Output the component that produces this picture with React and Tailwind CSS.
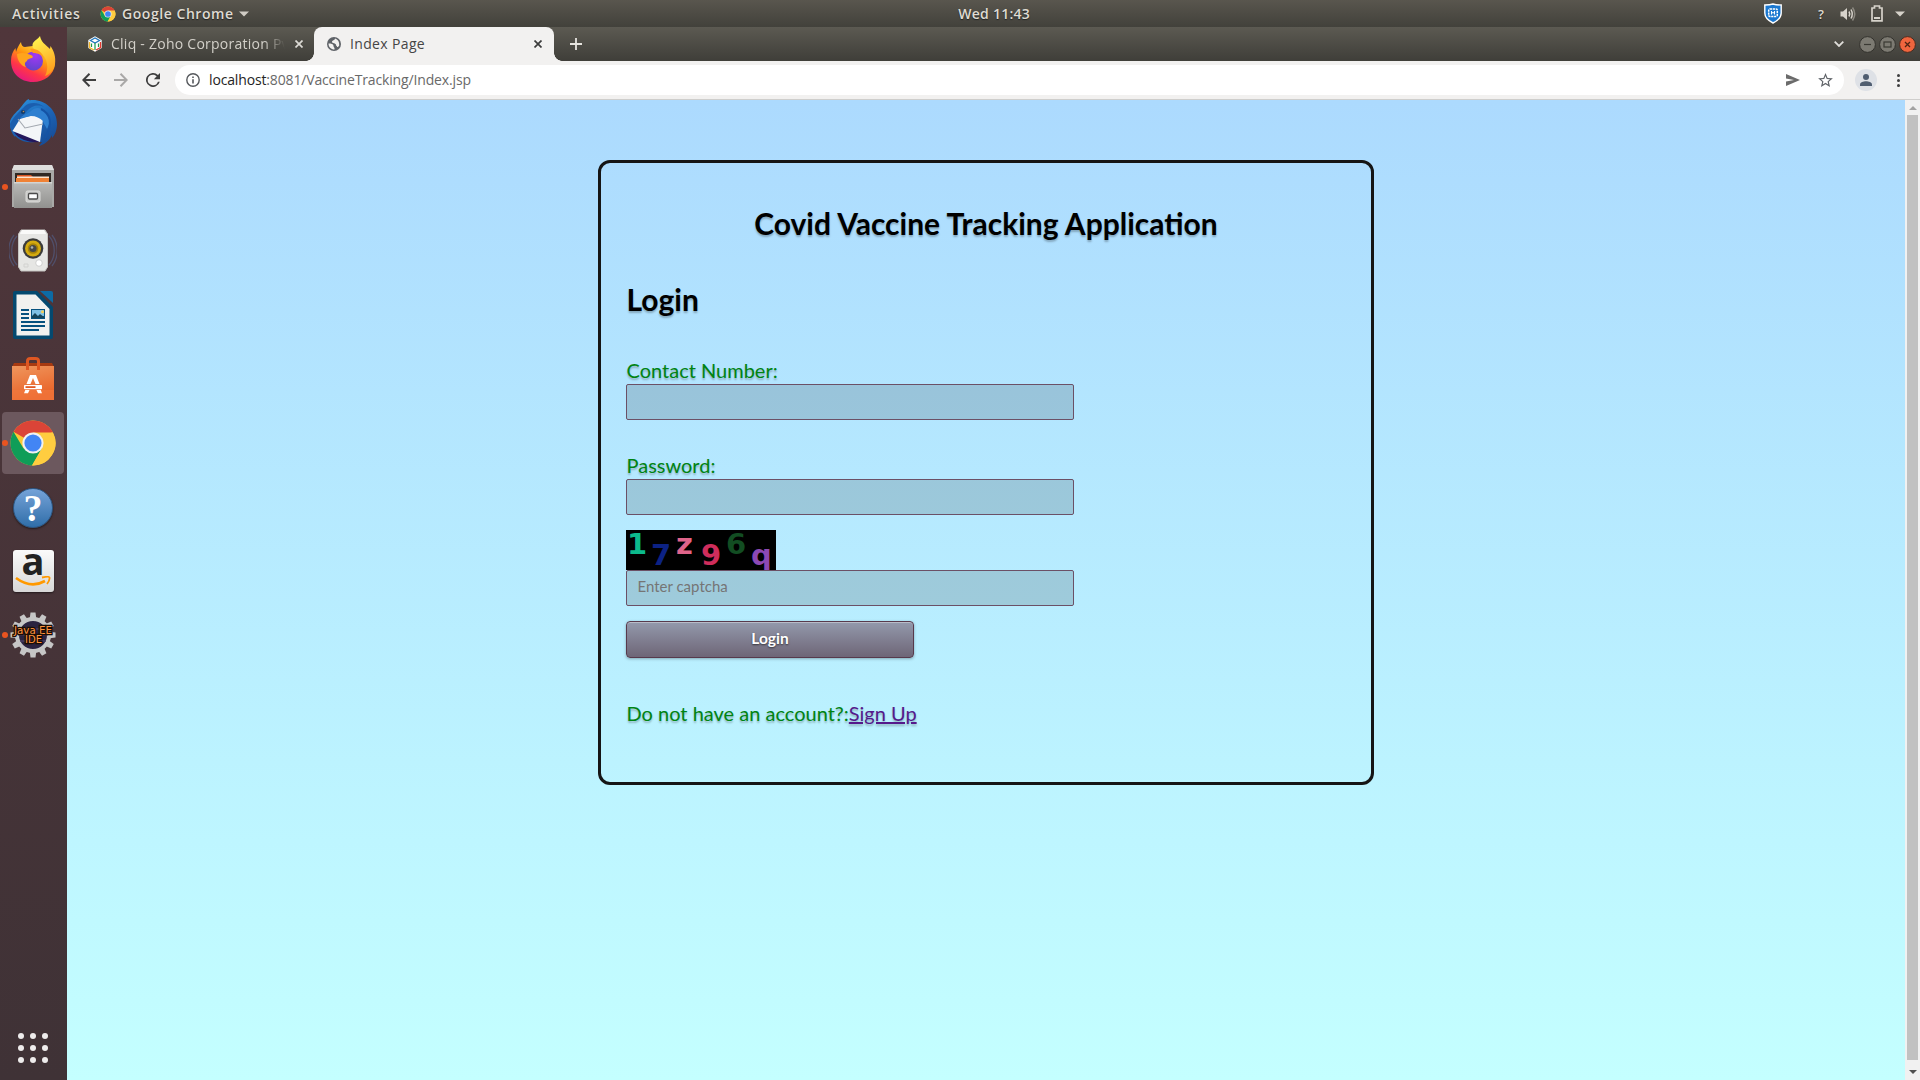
import React from "react";

function ChromeLogo({ className }) {
  return (
    <svg viewBox="0 0 48 48" className={className}>
      <circle cx="24" cy="24" r="22.5" fill="#fcc934" />
      <path d="M24 24 L4.5 12.75 A22.5 22.5 0 0 1 43.5 12.75 Z" fill="#db4437" />
      <path d="M24 24 L43.5 12.75 L24 13.5 Z M24 13.5 H43.8 L42 10.5 H24 Z" fill="#db4437" />
      <path d="M4.5 12.75 L14.5 29.5 L24 24 L32.8 29.5 L23 46.5 A22.5 22.5 0 0 1 4.5 12.75 Z" fill="#0f9d58" />
      <path d="M24 13.5 H43.9 A22.5 22.5 0 0 1 23 46.5 L33 29.3 Z" fill="#ffcd40" />
      <circle cx="24" cy="24" r="10.6" fill="#f1f1f1" />
      <circle cx="24" cy="24" r="8.6" fill="#4285f4" />
    </svg>
  );
}

function Firefox() {
  return (
    <svg viewBox="0 0 48 48" className="size-12">
      <defs>
        <linearGradient id="ff1" x1="0.8" y1="0.05" x2="0.25" y2="1">
          <stop offset="0" stopColor="#fff44f" />
          <stop offset="0.4" stopColor="#ff980e" />
          <stop offset="0.7" stopColor="#ff3647" />
          <stop offset="1" stopColor="#e31587" />
        </linearGradient>
        <radialGradient id="ff2" cx="0.6" cy="0.2" r="0.9">
          <stop offset="0" stopColor="#a238f5" />
          <stop offset="1" stopColor="#5b45c9" />
        </radialGradient>
        <linearGradient id="ff3" x1="0.3" y1="0" x2="0.6" y2="1">
          <stop offset="0" stopColor="#fff44f" />
          <stop offset="1" stopColor="#ff9a1c" />
        </linearGradient>
      </defs>
      <path d="M12 7 C12 10 14 12 16 12 C18 12 21 11 24 11 L38 14 C44 18 46.500 24 46 29 C45 40 35 47 24 47 C11 47 2 38 2 26 C2 20 4 16 6.500 13 L7 17 C8 13 10 10 12 7 Z" fill="url(#ff1)" />
      <path d="M31 1 C32 7 36 9 41 14 L41.500 11 C45 16 47 22 46 29 C45 35 41 39 36 41 C40 34 39 22 31 18 C26 16 22 12 24 8 C26 5 29 4 31 1 Z" fill="url(#ff3)" />
      <circle cx="24.500" cy="26" r="9.500" fill="url(#ff2)" />
      <path d="M8 19 C13 17 17 18 22 20 C24 21 24.500 22 23 23 C20 24 18 24 18 26 C16 27 15 29 17 32 C12 31 8 25 8 19 Z" fill="#ffa41c" />
      <path d="M21 14 C27 13 34 17 35 24 C33 20 29 18 24 18 Z" fill="#ff9a1c" />
    </svg>
  );
}

function Thunderbird() {
  return (
    <svg viewBox="0 0 48 48" className="size-12">
      <defs>
        <linearGradient id="tb" x1="0.2" y1="0" x2="0.8" y2="1">
          <stop offset="0" stopColor="#2a8fdc" />
          <stop offset="0.5" stopColor="#1c63b5" />
          <stop offset="1" stopColor="#164a94" />
        </linearGradient>
      </defs>
      <path d="M1 22 C4 15 9 12 12 8 C15 4 17 1 20 0 C20 1 20 1.500 22 1 C35 0 48 10 48 25 C48 31 46 36 43 39 L43 36 C41 41 35 46 30 47 L33 43 L26 43 C14 45 3 38 1 27 Z" fill="url(#tb)" />
      <path d="M1 25 C5 17 11 12 16 7 C20 3 30 3 35 8 C29 5 22 7 18 12 L8 24 L6 38 C3 35 1 30 1 25 Z" fill="#1b5eae" />
      <path d="M5 33 C9 40 20 44 31 43 L20 37 Z" fill="#24175c" />
      <path d="M11 20 L31 14 L34 20 L31 43 L3.500 32 Z" fill="#f3f5f8" />
      <path d="M9 20 L16 29 L34 25" fill="none" stroke="#a2a7af" strokeWidth="1.100" />
      <path d="M11 19 C15 15 19 15 22 12 C25 9 29 8 32 10 C40 14 43 22 38 30 C36 26 34 24 34 22 C31 19 27 17 22 17 Z" fill="#2e7fd0" />
      <path d="M32 10 C42 15 44 25 36 39" fill="none" stroke="#1553a5" strokeWidth="2" />
      <circle cx="14" cy="13" r="2.100" fill="#163d68" />
      <circle cx="14.500" cy="12.500" r="0.800" fill="#bb8b52" />
    </svg>
  );
}

function Files() {
  return (
    <svg viewBox="0 0 48 48" className="size-12">
      <defs>
        <linearGradient id="fl" x1="0" y1="0" x2="0" y2="1">
          <stop offset="0" stopColor="#b9b9b7" />
          <stop offset="1" stopColor="#91918f" />
        </linearGradient>
      </defs>
      <path d="M5 2 H43 L45 7 V44 H3 V7 Z" fill="#a9a9a7" />
      <path d="M5 2 H43 L45 7 H3 Z" fill="#dededd" />
      <rect x="6" y="10" width="36" height="10" fill="#302924" />
      <path d="M8 12 H22 L24 14 H40 V20 H8 Z" fill="#d9531e" />
      <path d="M7 15 H40 V20 H7 Z" fill="#f08235" />
      <rect x="8" y="13.500" width="32" height="1.500" fill="#fde4cd" />
      <path d="M5 19 H43 V45 H5 Z" fill="url(#fl)" />
      <path d="M5 19 H43 V20.500 H5 Z" fill="#d4d4d2" />
      <rect x="17" y="28" width="14" height="11" rx="1.500" fill="#c9c9c7" stroke="#dddddb" />
      <rect x="19.500" y="30.500" width="9" height="5.500" rx="1" fill="#fff" stroke="#4c4c4c" strokeWidth="1.300" />
    </svg>
  );
}

function Rhythmbox() {
  return (
    <svg viewBox="0 0 48 48" className="size-12">
      <g fill="none" stroke="#54699a" strokeWidth="1.300" opacity="0.5">
        <path d="M8 9 C1 17 1 30 8 38 M5 8 C-2 17 -2 30 5 39" />
        <path d="M40 9 C47 17 47 30 40 38 M43 8 C50 17 50 30 43 39" />
      </g>
      <path d="M12 3 H36 L38.500 7 V40 L36 44 H12 L9.500 40 V7 Z" fill="#e6e6e4" stroke="#c4c4c1" />
      <path d="M13 3 H35 L37 7 H11 Z" fill="#fafaf9" />
      <circle cx="24" cy="21.500" r="10.300" fill="#3b3b3b" />
      <circle cx="24" cy="21.500" r="8" fill="#d3aa10" />
      <circle cx="24" cy="21.500" r="5.300" fill="#a68208" />
      <circle cx="24" cy="21.500" r="3.600" fill="#454747" />
      <circle cx="23" cy="20.500" r="1.300" fill="#aeb3ad" />
      <circle cx="30" cy="36" r="3.300" fill="#fff" stroke="#cfcfcf" />
      <path d="M15 37 h4 v3 h-4z" fill="none" stroke="#d2d2d0" />
    </svg>
  );
}

function Writer() {
  return (
    <svg viewBox="0 0 48 48" className="size-12">
      <path d="M4 2 Q4 0 6 0 H28 L44 16 V46 Q44 48 42 48 H6 Q4 48 4 46 Z" fill="#04496f" />
      <path d="M7.500 3.500 H26.500 L40.500 18 V44.500 H7.500 Z" fill="#f1f1ef" />
      <path d="M31 0 H42 Q44 0 44 2 V12 Z" fill="#0d6ba5" />
      <g fill="#06517e">
        <path d="M12 18 h8 v2h-8z M12 22 h8 v2h-8z M12 26 h8 v2h-8z M12 30 h24 v2h-24z M12 34 h24 v2h-24z M12 38 h18 v2h-18z" />
        <path d="M22 18 H36 V28 H22 Z" />
      </g>
      <path d="M23 19 H35 V25 H23 Z" fill="#7fc0e4" />
      <path d="M23 27 V25 L26 22 L29 25 L31 23 L35 26 V27 Z" fill="#154358" />
      <circle cx="33.500" cy="20.800" r="1.500" fill="#f7cd51" />
    </svg>
  );
}

function Software() {
  return (
    <svg viewBox="0 0 48 48" className="size-12">
      <defs>
        <linearGradient id="sw" x1="0" y1="0" x2="0.3" y2="1">
          <stop offset="0" stopColor="#ef965d" />
          <stop offset="1" stopColor="#e96328" />
        </linearGradient>
      </defs>
      <path d="M5 8 H43 L45 12 H3 Z" fill="#a73a11" />
      <path d="M3 11 H45 V45 H3 Z" fill="url(#sw)" />
      <path d="M3 35 H45 V45 H3 Z" fill="#f37a3f" opacity="0.6" />
      <path d="M18.500 15 V6 Q18.500 3.500 21.500 3.500 H26.500 Q29.500 3.500 29.500 6 V15" fill="none" stroke="#de5722" strokeWidth="3" />
      <path d="M21 20 H27 L30.500 29 H26.500 L24 23 L21.500 29 H17.500 Z" fill="#fff" />
      <rect x="15" y="30" width="18" height="4.200" rx="0.800" fill="#fff" />
      <rect x="16.500" y="31.200" width="10" height="1.800" fill="#e25a23" />
      <path d="M16.300 35 H20.500 L19 38.200 H15 Z M27.500 35 H31.700 L33 38.200 H29 Z" fill="#fff" />
    </svg>
  );
}

function Help() {
  return (
    <div className="mt-0.5 flex size-10 items-center justify-center rounded-full border border-[#2b5785] bg-linear-to-b from-[#75a3d8] to-[#2f6ea9] font-['Liberation_Serif',serif] text-[38px] leading-none font-bold text-white shadow-[0_1px_2px_rgba(0,0,0,.5)]">
      ?
    </div>
  );
}

function Amazon() {
  return (
    <div className="flex h-[42px] w-[41px] flex-col items-center rounded-[3px] bg-linear-to-b from-[#fafafa] to-[#d8d8d8] shadow-[0_1px_2px_rgba(0,0,0,.5)]">
      <span className="h-[26px] font-['Open_Sans',sans-serif] text-[38px] leading-[21px] font-bold text-[#222]">a</span>
      <svg viewBox="0 0 36 12" className="h-3 w-9">
        <path d="M1 2 Q16 13 30 5" fill="none" stroke="#ff9900" strokeWidth="2.600" />
        <path d="M27 1.500 Q34 0 34.500 1.500 Q35 4 32 8" fill="none" stroke="#ff9900" strokeWidth="1.800" />
      </svg>
    </div>
  );
}

function JavaEE() {
  const teeth = Array.from({ length: 12 }, (_, i) => i * 30);
  return (
    <svg viewBox="0 0 48 48" className="size-12">
      {teeth.map((a) => (
        <path key={a} d="M20.800 7 L21.500 1.500 H26.500 L27.200 7 Z" fill="#c6c6c6" transform={`rotate(${a} 24 24)`} />
      ))}
      <circle cx="24" cy="24" r="16" fill="#2b2340" stroke="#c6c6c6" strokeWidth="4" />
      <path d="M11 18 H37 M9.500 24 H38.500 M11 30 H37" stroke="#4a3e62" strokeWidth="1.500" />
      <g fill="#ff9440" stroke="#1b0d04" strokeWidth="2.600" paintOrder="stroke" textAnchor="middle" fontFamily="DejaVu Sans, sans-serif" fontSize="10.500">
        <text x="24" y="22.500" textLength="38" lengthAdjust="spacingAndGlyphs">Java EE</text>
        <text x="24.500" y="32" textLength="17" lengthAdjust="spacingAndGlyphs">IDE</text>
      </g>
    </svg>
  );
}

const dock = [
  { name: "firefox", icon: <Firefox /> },
  { name: "mail", icon: <Thunderbird /> },
  { name: "files", icon: <Files />, running: true },
  { name: "music", icon: <Rhythmbox /> },
  { name: "writer", icon: <Writer /> },
  { name: "software", icon: <Software /> },
  { name: "chrome", icon: <ChromeLogo className="size-12" />, running: true, active: true },
  { name: "help", icon: <Help /> },
  { name: "amazon", icon: <Amazon /> },
  { name: "javaee", icon: <JavaEE />, running: true },
];

function Dock() {
  return (
    <aside className="flex w-[67px] shrink-0 flex-col bg-linear-to-b from-[#50363b] to-[#3f3236]">
      {dock.map((d) => (
        <div key={d.name} className="flex h-16 items-center">
          <div className={d.active ? "ml-0.5 flex h-[62px] w-[62px] items-center rounded bg-[#6c585e]" : "ml-0.5 flex h-[62px] w-[62px] items-center"}>
            <span className={d.running ? "size-1.5 shrink-0 rounded-full bg-[#e95420]" : "size-1.5 shrink-0"} />
            <span className="flex w-[50px] items-center justify-center">{d.icon}</span>
          </div>
        </div>
      ))}
      <div className="mt-auto mb-[17px] ml-[18px] grid w-[30px] grid-cols-3 gap-1.5">
        {Array.from({ length: 9 }, (_, i) => (
          <span key={i} className="size-1.5 rounded-full bg-[#eeecec]" />
        ))}
      </div>
    </aside>
  );
}

function TopBar() {
  return (
    <header className="flex h-[27px] items-center bg-linear-to-b from-[#59564e] to-[#42413b] text-[14px] font-semibold text-[#dfdbd2] [text-shadow:0_1px_1px_#222]">
      <span className="mb-px ml-3 w-[88px] tracking-[0.72px]">Activities</span>
      <ChromeLogo className="size-4" />
      <span className="mb-px ml-1.5 tracking-[0.55px]">Google Chrome</span>
      <svg viewBox="0 0 10 6" className="ml-[5px] h-1.5 w-2.5"><path d="M0 0.500 H10 L5 5.500 Z" fill="#d0ccc4" /></svg>
      <div className="flex flex-1 justify-end">
        <span className="mr-[734px] mb-px tracking-[0.25px] whitespace-nowrap">Wed 11:43</span>
      </div>
      <svg viewBox="0 0 18 21" className="h-[21px] w-[18px]">
        <path d="M9 1 C6 2 3 2 0.800 2 V10 C0.800 15 5 18 9 20 C13 18 17.200 15 17.200 10 V2 C15 2 12 2 9 1 Z" fill="#1b78d0" stroke="#fff" strokeWidth="1.400" />
        <rect x="4.700" y="6" width="8.600" height="7.500" rx="1.200" fill="none" stroke="#fff" strokeWidth="1.500" strokeDasharray="2.200 0.700" />
        <path d="M7.500 8 V11.500 M10.500 8 V11.500 M7 9.750 H11" stroke="#fff" strokeWidth="1.100" />
      </svg>
      <span className="mt-px ml-9 w-3 text-[13px] leading-[27px]">?</span>
      <svg viewBox="0 0 16 16" className="ml-2.5 size-4" fill="none" stroke="#d6d2ca" strokeWidth="1.500">
        <path d="M0.500 5.500 H3 L7 2 V14 L3 10.500 H0.500 Z" fill="#d6d2ca" stroke="none" />
        <path d="M9 5.500 Q10.500 8 9 10.500 M11 3.500 Q13.500 8 11 12.500" />
        <path d="M12.500 1.500 Q17 8 12.500 14.500" stroke="#8c8981" />
      </svg>
      <svg viewBox="0 0 12 17" className="ml-[15px] h-[17px] w-3" fill="none" stroke="#d6d2ca" strokeWidth="1.700">
        <path d="M3.500 3 V1 H8.500 V3 H11 V15.800 H1 V3 Z" /><path d="M3 13 H9" strokeWidth="2" />
      </svg>
      <svg viewBox="0 0 10 6" className="mr-[15px] ml-3 h-1.5 w-2.5"><path d="M0 0.500 H10 L5 5.500 Z" fill="#d6d2ca" /></svg>
    </header>
  );
}

function Cross({ color }) {
  return (
    <svg viewBox="0 0 8 8" className="size-2"><path d="M0.500 0.500 L7.500 7.500 M7.500 0.500 L0.500 7.500" stroke={color} strokeWidth="1.700" /></svg>
  );
}

function TabStrip() {
  return (
    <div className="flex h-[34px] items-center bg-linear-to-b from-[#5c5a52] to-[#3f3e39] text-[14px]">
      <svg viewBox="0 0 14 16" className="ml-[21px] h-4 w-3.5">
        <path d="M7 0.300 L13.700 4 V12 L7 15.700 L0.300 12 V4 Z" fill="#fff" />
        <path d="M2.500 4.500 L7 2 L11.500 4.500 L7 7 Z" fill="none" stroke="#2277bb" strokeWidth="1.300" />
        <path d="M1.500 6 V11.500 L6 14" fill="none" stroke="#f2b62c" strokeWidth="1.300" />
        <path d="M12.500 6 V11.500 L8 14" fill="none" stroke="#e4392e" strokeWidth="1.300" />
        <path d="M7 7 V14 M3.500 7.500 V11 M10.500 7.500 V11" stroke="#1c9a4c" strokeWidth="1.200" />
      </svg>
      <span className="mb-0.5 ml-[9px] w-[174px] tracking-[0.25px] whitespace-nowrap text-[#d3d0c9] [mask-image:linear-gradient(90deg,#000_88%,transparent)]">
        Cliq - Zoho Corporation Pv
      </span>
      <span className="ml-[10px] w-[19px]"><Cross color="#dcdad5" /></span>
      <div className="relative flex h-full w-60 items-center rounded-t-lg bg-[#f2f1f0] text-[#454545]">
        <span className="absolute bottom-0 -left-2 size-2 bg-[radial-gradient(circle_at_0_0,transparent_7.5px,#f2f1f0_8px)]" />
        <span className="absolute -right-2 bottom-0 size-2 bg-[radial-gradient(circle_at_100%_0,transparent_7.5px,#f2f1f0_8px)]" />
        <svg viewBox="0 0 14 14" className="ml-[13px] size-3.5">
          <circle cx="7" cy="7" r="7" fill="#5f6368" />
          <path d="M8 1.500 C8 3.500 5 3 5 5 C5 6.500 9 6 9 8 C9 9.500 10.500 9 12 9.500 C12.800 6 11.500 2.500 8 1.500 Z M1.500 6.500 C4 6.500 6.500 7 6.500 9 C6.500 10.500 8 10.500 7.500 12.500 C4 12.500 1.500 10 1.500 6.500 Z" fill="#f2f1f0" />
        </svg>
        <span className="mb-0.5 ml-[9px] flex-1 tracking-[0.35px]">Index Page</span>
        <span className="mr-3"><Cross color="#3c3c3c" /></span>
      </div>
      <svg viewBox="0 0 12 12" className="ml-4 size-3"><path d="M6 0 V12 M0 6 H12" stroke="#e6e4df" strokeWidth="1.800" /></svg>
      <svg viewBox="0 0 10 6" className="ml-auto h-1.5 w-2.5"><path d="M0.700 0.700 L5 5 L9.300 0.700" fill="none" stroke="#e0deda" strokeWidth="1.800" /></svg>
      <div className="mr-1 ml-[15px] flex gap-[3px]">
        <svg viewBox="0 0 17 17" className="size-[17px]"><circle cx="8.500" cy="8.500" r="7.900" fill="#7c7a72" stroke="#33322d" /><path d="M5 8.500 H12" stroke="#3a3933" strokeWidth="1.200" /></svg>
        <svg viewBox="0 0 17 17" className="size-[17px]"><circle cx="8.500" cy="8.500" r="7.900" fill="#7c7a72" stroke="#33322d" /><rect x="5" y="6" width="7" height="5" fill="none" stroke="#3a3933" strokeWidth="1.200" /></svg>
        <svg viewBox="0 0 17 17" className="size-[17px]"><circle cx="8.500" cy="8.500" r="7.900" fill="#f0653e" stroke="#4a2c20" /><path d="M6 6 L11 11 M11 6 L6 11" stroke="#4f2413" strokeWidth="1.300" /></svg>
      </div>
    </div>
  );
}

function Toolbar() {
  return (
    <div className="flex h-[39px] items-center border-b border-[#cfcecc] bg-[#f2f1f0]">
      <svg viewBox="0 0 14 14" className="ml-[15px] size-3.5" fill="none" stroke="#3e3e3e" strokeWidth="2"><path d="M14 7 H1.500 M7.500 0.800 L1.300 7 L7.500 13.200" /></svg>
      <svg viewBox="0 0 14 14" className="ml-[18px] size-3.5" fill="none" stroke="#a9a8a7" strokeWidth="2"><path d="M0 7 H12.500 M6.500 0.800 L12.700 7 L6.500 13.200" /></svg>
      <svg viewBox="4 4 16 16" className="ml-[18px] size-3.5" fill="#3e3e3e"><path d="M17.650 6.350 A8 8 0 1 0 19.730 14 H17.650 A6 6 0 1 1 12 6 C13.660 6 15.140 6.690 16.220 7.780 L13 11 H20 V4 Z" /></svg>
      <div className="ml-[15px] flex h-[30px] flex-1 items-center rounded-full bg-white pl-[11px] text-[14px] tracking-[-0.15px] text-[#696969]">
        <svg viewBox="0 0 14 14" className="size-3.5" fill="none" stroke="#55585c" strokeWidth="1.400"><circle cx="7" cy="7" r="6.200" /><path d="M7 6.200 V10.500 M7 3.400 V4.900" strokeWidth="1.600" /></svg>
        <span className="mb-0.5 ml-[9px]"><span className="text-[#242424]">localhost</span>:8081/VaccineTracking/Index.jsp</span>
        <svg viewBox="0 0 14 12" className="mr-[18px] ml-auto h-3 w-3.5"><path d="M0 0 L14 6 L0 12 V7.400 L8 6 L0 4.600 Z" fill="#6b6b6b" /></svg>
        <svg viewBox="2 2 20 19" className="mr-[11px] h-3.5 w-[15px]" fill="#5f6368"><path d="M22 9.240l-7.190-.62L12 2 9.190 8.630 2 9.240l5.460 4.730L5.820 21 12 17.270 18.180 21l-1.630-7.030L22 9.240zM12 15.400l-3.760 2.270 1-4.280-3.320-2.880 4.380-.38L12 6.100l1.710 4.040 4.380.38-3.320 2.880 1 4.280L12 15.400z" /></svg>
      </div>
      <div className="ml-[11px] flex size-[22px] items-center justify-center rounded-full bg-[#dee1e6]">
        <svg viewBox="0 0 12 12" className="size-3" fill="#4f5d70"><circle cx="6" cy="3" r="3" /><path d="M0 12 V10.500 C0 8.500 3.500 7.300 6 7.300 C8.500 7.300 12 8.500 12 10.500 V12 Z" /></svg>
      </div>
      <div className="mr-5 ml-5 flex flex-col gap-0.5">
        <span className="size-[3px] rounded-full bg-[#3e3e3e]" />
        <span className="size-[3px] rounded-full bg-[#3e3e3e]" />
        <span className="size-[3px] rounded-full bg-[#3e3e3e]" />
      </div>
    </div>
  );
}

function Captcha() {
  return (
    <svg viewBox="0 0 150 40" className="mt-[15px] block h-10 w-[150px] bg-black" fontFamily="DejaVu Sans, sans-serif" fontWeight="700" fontSize="29">
      <text x="1" y="23.500" fill="#0cba8c">1</text>
      <text x="25" y="34.500" fill="#0c2284">7</text>
      <text x="50" y="24" fill="#e0648a">z</text>
      <text x="75" y="34.500" fill="#cf2d5c">9</text>
      <text x="100" y="23.500" fill="#124d22">6</text>
      <text x="125" y="34.500" fill="#8c49b4">q</text>
    </svg>
  );
}

function LoginPage() {
  return (
    <main className="flex-1 bg-linear-to-b from-[#acdafe] to-[#c4ffff] font-['Lato',sans-serif]">
      <section className="mx-auto mt-[60px] flex h-[625px] w-[776px] flex-col rounded-xl border-3 border-[#151515] px-[25px] pt-[42px] [text-shadow:0_2px_2px_rgba(0,0,0,.25)]">
        <h1 className="text-center text-[30px] leading-9 font-bold text-black">Covid Vaccine Tracking Application</h1>
        <h2 className="mt-10 pl-[0.5px] text-[30px] leading-9 font-bold text-black">Login</h2>
        <label className="mt-[41px] pl-[0.5px] text-[20px] leading-6 text-[#008312]">Contact Number:</label>
        <input className="mt-0.5 h-9 w-[448px] rounded-xs border border-[#6b5066] bg-black/14" />
        <label className="mt-[33px] pl-[0.5px] text-[20px] leading-6 text-[#008312]">Password:</label>
        <input type="password" className="mt-0.5 h-9 w-[448px] rounded-xs border border-[#6b5066] bg-black/14" />
        <Captcha />
        <input placeholder="Enter captcha" className="h-9 w-[448px] rounded-xs border border-[#6b5066] bg-black/14 pr-2.5 pb-1 pl-[10.5px] text-[15px] placeholder:text-[#757575] [text-shadow:none]" />
        <button className="mt-[15px] h-[37px] w-72 rounded border border-[#573a4c] bg-linear-to-b from-[#9399ac] to-[#6e6677] pb-[3px] text-[15.5px] leading-5 font-bold text-white shadow-[inset_0_1px_0_rgba(255,255,255,.35),0_1px_3px_rgba(0,0,0,.3)] [text-shadow:0_1px_2px_rgba(0,0,0,.6)]">
          Login
        </button>
        <p className="mt-[43px] pl-[0.5px] text-[20px] leading-6 text-[#008312]">
          Do not have an account?:<a href="#" className="text-[#551a8b] underline">Sign Up</a>
        </p>
      </section>
    </main>
  );
}

function Scrollbar() {
  return (
    <div className="flex w-[15px] flex-col items-center bg-[#f1f1f1]">
      <svg viewBox="0 0 8 4" className="mt-[6px] h-1 w-2"><path d="M0 4 L4 0 L8 4 Z" fill="#a3a3a3" /></svg>
      <div className="mt-[5px] mb-2.5 w-[11px] flex-1 bg-[#c1c1c1]" />
      <svg viewBox="0 0 8 4" className="mb-1.5 h-1 w-2"><path d="M0 0 L4 4 L8 0 Z" fill="#505050" /></svg>
    </div>
  );
}

export default function App() {
  return (
    <div className="flex h-[1080px] w-[1920px] flex-col overflow-hidden font-['Open_Sans',sans-serif]">
      <TopBar />
      <div className="flex min-h-0 flex-1">
        <Dock />
        <div className="flex min-w-0 flex-1 flex-col">
          <TabStrip />
          <Toolbar />
          <div className="flex min-h-0 flex-1">
            <LoginPage />
            <Scrollbar />
          </div>
        </div>
      </div>
    </div>
  );
}
